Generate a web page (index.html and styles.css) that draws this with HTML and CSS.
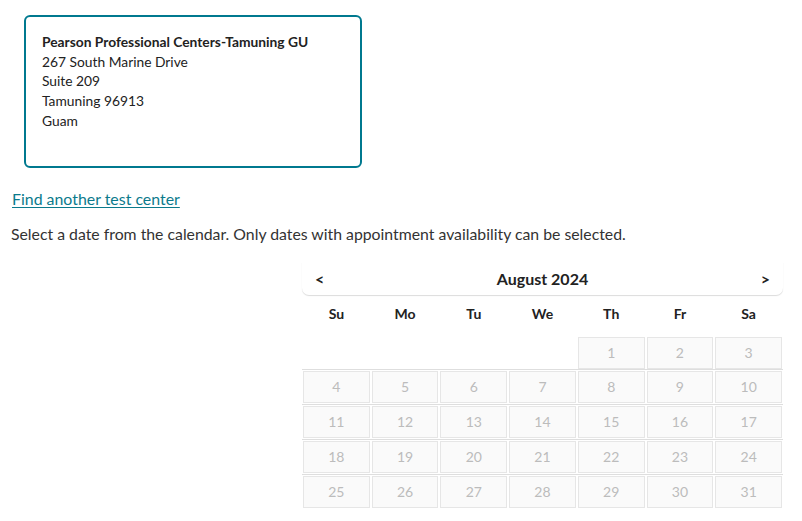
FILE: index.html
```html
<!DOCTYPE html>
<html lang="en">
<head>
<meta charset="utf-8">
<title>Select a date</title>
<link rel="stylesheet" href="styles.css">
</head>
<body>
<div class="card">
  <div class="card-name">Pearson Professional Centers-Tamuning GU</div>
  <div>267 South Marine Drive</div>
  <div>Suite 209</div>
  <div>Tamuning 96913</div>
  <div>Guam</div>
</div>
<a class="find-link" href="#">Find another test center</a>
<p class="hint">Select a date from the calendar. Only dates with appointment availability can be selected.</p>
<div class="calendar">
  <div class="cal-head">
    <span class="nav">&lt;</span>
    <span class="month">August 2024</span>
    <span class="nav">&gt;</span>
  </div>
  <div class="dow">
    <span>Su</span><span>Mo</span><span>Tu</span><span>We</span><span>Th</span><span>Fr</span><span>Sa</span>
  </div>
  <div class="weeks">
    <div class="week">
      <span class="empty"></span><span class="empty"></span><span class="empty"></span><span class="empty"></span>
      <span class="day">1</span><span class="day">2</span><span class="day">3</span>
    </div>
    <div class="week">
      <span class="day">4</span><span class="day">5</span><span class="day">6</span><span class="day">7</span><span class="day">8</span><span class="day">9</span><span class="day">10</span>
    </div>
    <div class="week">
      <span class="day">11</span><span class="day">12</span><span class="day">13</span><span class="day">14</span><span class="day">15</span><span class="day">16</span><span class="day">17</span>
    </div>
    <div class="week">
      <span class="day">18</span><span class="day">19</span><span class="day">20</span><span class="day">21</span><span class="day">22</span><span class="day">23</span><span class="day">24</span>
    </div>
    <div class="week">
      <span class="day">25</span><span class="day">26</span><span class="day">27</span><span class="day">28</span><span class="day">29</span><span class="day">30</span><span class="day">31</span>
    </div>
  </div>
</div>
</body>
</html>
```
FILE: styles.css
```css
* { box-sizing: border-box; }
body {
  margin: 0;
  font-family: Lato, "Open Sans", sans-serif;
  color: #333;
  background: #fff;
}
.card {
  margin: 15px 0 0 24px;
  width: 338px;
  height: 153px;
  border: 2px solid #00798f;
  border-radius: 6px;
  padding: 15px 16px;
  font-size: 13.8px;
  line-height: 19.7px;
  color: #222;
}
.card-name { font-weight: 700; }
.find-link {
  display: inline-block;
  margin: 21px 0 0 12px;
  font-size: 15.9px;
  line-height: 20px;
  color: #0b7a8c;
  text-decoration: underline;
  text-underline-offset: 2px;
}
.hint {
  margin: 15px 0 0 11px;
  font-size: 15.8px;
  line-height: 20px;
  color: #333;
}
.calendar {
  margin: 18px 0 0 302px;
  width: 481px;
}
.cal-head {
  height: 33px;
  display: flex;
  align-items: center;
  justify-content: space-between;
  padding: 0 13px 0 13px;
  border-radius: 0 0 7px 7px;
  box-shadow: 0 1px 1px rgba(0, 0, 0, 0.14);
  font-weight: 700;
  color: #222;
}
.nav { font-size: 16px; }
.month { font-size: 16px; }
.dow {
  display: grid;
  grid-template-columns: repeat(7, 1fr);
  column-gap: 2px;
  padding: 9px 1px 12px;
  font-size: 14px;
  line-height: 20px;
  font-weight: 700;
  color: #222;
  text-align: center;
}
.week {
  display: grid;
  grid-template-columns: repeat(7, 1fr);
  column-gap: 2px;
  padding: 1px 1px;
}
.week:first-child { padding-bottom: 0; }
.week + .week { border-top: 1px solid #dedede; }
.day, .empty { height: 32px; }
.day {
  display: flex;
  align-items: center;
  justify-content: center;
  padding-bottom: 2px;
  border: 1px solid #e6e6e6;
  background: #fafafa;
  color: #bcbcbc;
  font-size: 14px;
}
```
